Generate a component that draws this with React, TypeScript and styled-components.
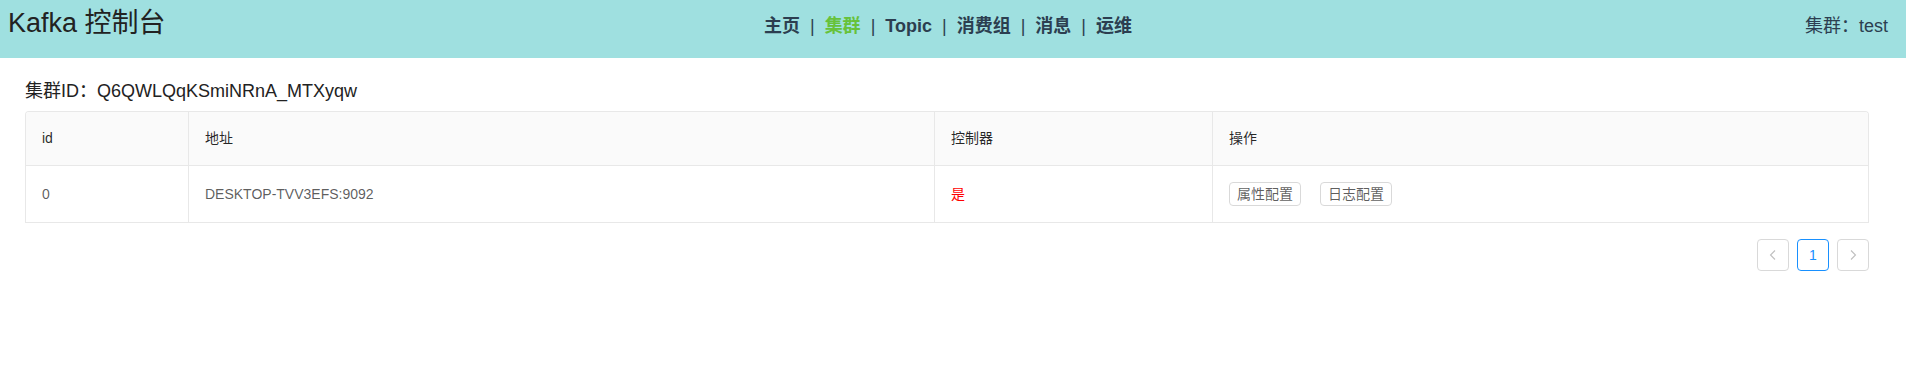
import React, { FC } from 'react';
import styled, { createGlobalStyle } from 'styled-components';

const GlobalStyle = createGlobalStyle`
  body {
    margin: 0;
    background: #fff;
    font-family: "Liberation Sans", Arial, "Noto Sans CJK SC", sans-serif;
  }
`;

const navItems = ['主页', '集群', 'Topic', '消费组', '消息', '运维'];
const activeNav = '集群';

const columns = ['id', '地址', '控制器', '操作'];

const brokers = [{ id: 0, host: 'DESKTOP-TVV3EFS:9092', controller: true }];

const App: FC = () => (
  <>
    <GlobalStyle />
    <Header>
      <Title>Kafka 控制台</Title>
      <Nav>
        {navItems.map((item, i) => (
          <React.Fragment key={item}>
            {i > 0 && <Pipe>|</Pipe>}
            <NavLink active={item === activeNav}>{item}</NavLink>
          </React.Fragment>
        ))}
      </Nav>
      <ClusterName>集群：test</ClusterName>
    </Header>
    <Content>
      <ClusterId>集群ID：Q6QWLQqKSmiNRnA_MTXyqw</ClusterId>
      <Table>
        <Row head>
          {columns.map((c, i) => (
            <Cell key={c} head last={i === columns.length - 1}>
              {c}
            </Cell>
          ))}
        </Row>
        {brokers.map((b) => (
          <Row key={b.id}>
            <Cell>{b.id}</Cell>
            <Cell>{b.host}</Cell>
            <Cell>{b.controller ? <Yes>是</Yes> : '否'}</Cell>
            <Cell last>
              <Actions>
                <SmallButton>属性配置</SmallButton>
                <SmallButton>日志配置</SmallButton>
              </Actions>
            </Cell>
          </Row>
        ))}
      </Table>
      <Pagination>
        <PageItem disabled>
          <Chevron dir="left" />
        </PageItem>
        <PageItem active>1</PageItem>
        <PageItem disabled>
          <Chevron dir="right" />
        </PageItem>
      </Pagination>
    </Content>
  </>
);

const Chevron: FC<{ dir: 'left' | 'right' }> = ({ dir }) => (
  <svg width="12" height="12" viewBox="0 0 12 12" fill="none">
    <path
      d={dir === 'left' ? 'M8 1.5 L3.5 6 L8 10.5' : 'M4 1.5 L8.5 6 L4 10.5'}
      stroke="currentColor"
      strokeWidth="1.1"
    />
  </svg>
);

const Header = styled.header`
  height: 58px;
  box-sizing: border-box;
  padding: 5px 18px 0 8px;
  background: #9fe0e0;
  color: #2c3e50;
  display: grid;
  grid-template-columns: 1fr auto 1fr;
  align-items: baseline;
`;

const Title = styled.div`
  font-size: 27px;
  line-height: 36px;
  color: #222;
`;

const Nav = styled.nav`
  display: flex;
  align-items: baseline;
  font-size: 18px;
  line-height: 24px;
  font-weight: bold;
`;

const NavLink = styled.span<{ active?: boolean }>`
  color: ${(p) => (p.active ? '#67c23a' : '#2c3e50')};
`;

const Pipe = styled.span`
  padding: 0 10px;
  font-weight: normal;
`;

const ClusterName = styled.div`
  justify-self: end;
  font-size: 18px;
  line-height: 24px;
  color: #2c3e50;
`;

const Content = styled.main`
  padding: 21px 37px 0 25px;
`;

const ClusterId = styled.div`
  font-size: 18px;
  line-height: 24px;
  color: #222;
  margin-bottom: 8px;
`;

const Table = styled.div`
  border: 1px solid #e8e8e8;
  border-bottom: none;
  border-radius: 4px 4px 0 0;
  overflow: hidden;
  font-size: 14px;
  line-height: 21px;
`;

const Row = styled.div<{ head?: boolean }>`
  display: grid;
  grid-template-columns: 163px 746px 278px 1fr;
  background: ${(p) => (p.head ? '#fafafa' : '#fff')};
  color: ${(p) => (p.head ? 'rgba(0, 0, 0, 0.85)' : 'rgba(0, 0, 0, 0.65)')};
  border-bottom: 1px solid #e8e8e8;
  min-height: ${(p) => (p.head ? '53px' : '56px')};
`;

const Cell = styled.div<{ head?: boolean; last?: boolean }>`
  padding: 16px;
  display: flex;
  align-items: center;
  border-right: ${(p) => (p.last ? 'none' : '1px solid #e8e8e8')};
`;

const Yes = styled.span`
  color: #f00;
`;

const Actions = styled.div`
  display: flex;
  gap: 19px;
`;

const SmallButton = styled.button`
  height: 24px;
  padding: 0 7px;
  font-family: inherit;
  font-size: 14px;
  line-height: 22px;
  color: rgba(0, 0, 0, 0.65);
  background: #fff;
  border: 1px solid #d9d9d9;
  border-radius: 4px;
  cursor: pointer;
`;

const Pagination = styled.div`
  display: flex;
  justify-content: flex-end;
  gap: 8px;
  margin-top: 16px;
`;

const PageItem = styled.div<{ active?: boolean; disabled?: boolean }>`
  width: 32px;
  height: 32px;
  box-sizing: border-box;
  display: flex;
  align-items: center;
  justify-content: center;
  border: 1px solid ${(p) => (p.active ? '#1890ff' : '#d9d9d9')};
  border-radius: 4px;
  font-size: 14px;
  color: ${(p) => (p.active ? '#1890ff' : p.disabled ? 'rgba(0, 0, 0, 0.25)' : 'rgba(0, 0, 0, 0.65)')};
  background: #fff;
`;

export default App;
